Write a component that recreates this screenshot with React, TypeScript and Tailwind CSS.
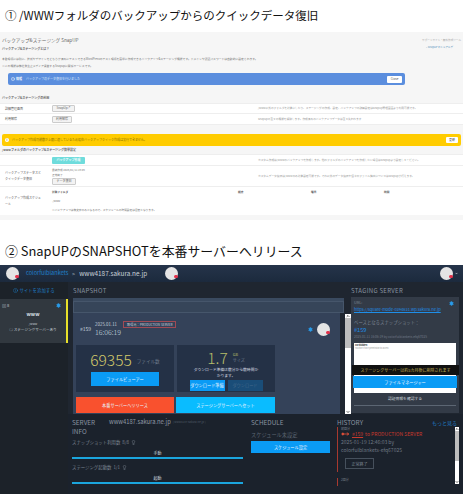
// App.tsx
import { ChevronDown, ChevronUp, Info, Lightbulb, Settings } from 'lucide-react'

const jp = "font-['Noto_Sans_CJK_JP','Liberation_Sans',sans-serif]"

function Avatar({ size }: { size: string }) {
  return (
    <div className={`relative shrink-0 rounded-full bg-[#e4e4e4] ${size}`}>
      <div className="absolute right-0 bottom-[14%] h-[22%] w-[30%] rounded-sm bg-[#e2304a]" />
    </div>
  )
}

function WpRow({ label, desc, children, h }: { label: React.ReactNode; desc: string; children: React.ReactNode; h: string }) {
  return (
    <div className={`flex items-center border-b border-[#eeeeee] bg-white ${h}`}>
      <div className="w-[52px] shrink-0 pl-[5px] text-[3px] leading-[6px] text-[#555]">{label}</div>
      <div className="w-[206px] shrink-0">{children}</div>
      <div className="text-[2.7px] whitespace-nowrap text-[#999]">{desc}</div>
    </div>
  )
}

function WpButton({ children, w }: { children: React.ReactNode; w: string }) {
  return (
    <div className={`flex h-[7px] items-center justify-center rounded-[1px] border border-[#cccccc] bg-[#f3f3f3] text-[3px] text-[#666] ${w}`}>
      {children}
    </div>
  )
}

function WpPanel() {
  return (
    <div className="mt-[3px] h-[188px] overflow-hidden bg-[#f6f6f6]">
      <div className="flex items-start justify-between pt-[5px] pr-[2px] pl-[2px]">
        <div>
          <div className="text-[4.6px] leading-[7px] text-[#666]">バックアップ&ステージング SnapUP</div>
          <div className="mt-[3px] text-[3px] leading-[5px] font-bold text-[#666]">バックアップ&ステージングとは？</div>
          <div className="mt-[5px] text-[2.8px] leading-[5px] whitespace-nowrap text-[#777]">
            本番環境には別に、技術やデザインをどちらか済みにテストできるWordPressのテスト環境を簡単に作成できるバックアップ&ステージング機能です。ドメインや認証パスワードは自動的に設定されます。
          </div>
          <div className="mt-[2px] text-[2.8px] leading-[5px] text-[#777]">※この機能は弊社発生止メディア運営するSnapupに関係サービスです。</div>
        </div>
        <div className="shrink-0 text-right">
          <div className="text-[2.6px] leading-[6px] text-[#aaa]">サポートサイト・無料作成ツール</div>
          <div className="mt-[3px] pr-[8px] text-[2.6px] text-[#5a94bd]">» SnapUPマニュアルデ</div>
        </div>
      </div>

      <div className="mt-[4px] ml-[8px] flex h-[12px] w-[397px] items-center rounded-[2px] bg-[#5b8ede] pr-[3px] pl-[3px]">
        <Info className="h-[4px] w-[4px] text-white" strokeWidth={2.5} />
        <span className="ml-[1px] text-[3px] font-bold text-white">情報</span>
        <span className="ml-[4px] text-[3px] text-[#dfe9fa]">バックアップのデータ復旧を行いました</span>
        <div className="ml-auto flex h-[7px] w-[15px] items-center justify-center rounded-[1px] bg-white text-[3px] text-[#555]">Close</div>
      </div>

      <div className="mt-[11px] pl-[2px] text-[3px] leading-[5px] font-bold text-[#666]">バックアップ&ステージングの利用</div>
      <div className="mt-[2px] border-t border-[#eeeeee]">
        <WpRow h="h-[10px]" label="詳細管理画面" desc="/www以外のフォルダを対象にしたり、ステージングの作成、設定、バックアップの詳細設定はSnapup管理画面より利用可能です。">
          <WpButton w="w-[23px]">SnapUp↗</WpButton>
        </WpRow>
        <WpRow h="h-[11px]" label="利用解除" desc="Snapupの全ての機能を解除します。作成済みのバックアップデータは全て失われます">
          <WpButton w="w-[20px]">利用解除</WpButton>
        </WpRow>
      </div>

      <div className="mx-[2px] mt-[9px] flex h-[12px] items-center rounded-[2px] bg-[#ffcc00] pr-[3px] pl-[3px]">
        <div className="flex h-[4px] w-[4px] items-center justify-center rounded-full bg-white text-[3px] font-bold text-[#a88600]">i</div>
        <span className="ml-[3px] text-[3px] text-[#8a7200]">バックアップ作成可能数が上限に達しているため現在バックアップクイック作成は実行できません。</span>
        <div className="ml-auto flex h-[6px] w-[12px] items-center justify-center rounded-[1px] bg-white text-[3px] text-[#555]">更新</div>
      </div>

      <div className="mt-[2px] pl-[2px] text-[3px] leading-[5px] font-bold text-[#666]">/wwwフォルダのバックアップ&ステージング簡単設定</div>
      <div className="mt-[1px] border-t border-[#eeeeee]">
        <WpRow h="h-[11px]" label="" desc="カスタム作成は/wwwのバックアップを作成します。他のフォルダのバックアップを作成したい場合はSnapupより設定してください。">
          <div className="flex h-[7px] w-[33px] items-center justify-center rounded-[1px] bg-[#6fdcdc] text-[3px] font-bold text-white">バックアップ作成</div>
        </WpRow>
        <WpRow
          h="h-[21px]"
          label={
            <>
              バックアップステータスと
              <br />
              クイックデータ復旧
            </>
          }
          desc="カスタムデータ復旧は/wwwのみ対象設定可能です。それ以外のデータ復旧や個々のファイル抽出についてはSnapupが行えます。"
        >
          <div className="text-[2.7px] leading-[5px] text-[#777]">最終作成 2025/01/11 16:06</div>
          <div className="text-[2.7px] leading-[5px] text-[#777]">正常終了</div>
          <WpButton w="w-[24px]">データ復旧</WpButton>
        </WpRow>
        <div className="flex h-[28px] items-center bg-white">
          <div className="w-[52px] shrink-0 pl-[5px] text-[3px] leading-[6px] text-[#555]">
            バックアップ作成スケジュ
            <br />
            ール
          </div>
          <div className="flex-1 text-[2.7px] text-[#777]">
            <div className="grid grid-cols-[186px_73px_73px_1fr] font-bold text-[#555]">
              <span>対象フォルダ</span>
              <span>頻度</span>
              <span>曜日</span>
              <span>時間</span>
            </div>
            <div className="mt-[5px]">./www</div>
            <div className="mt-[5px]">※バックアップは弊文字のみとなるので、スケジュールの時間設定は目安となります。</div>
          </div>
        </div>
      </div>
    </div>
  )
}

function StatBlue({ children, className }: { children: React.ReactNode; className: string }) {
  return <div className={`flex items-center justify-center text-[4.2px] whitespace-nowrap text-[#e8f4ff] ${className}`}>{children}</div>
}

function SnapshotPanel() {
  return (
    <div className="flex h-[116px] w-[271px] flex-col bg-[#3a4a5f] pt-[3px]">
      <div className="h-[12px] border border-[#46566b] bg-[#364559]" />
      <div className="flex min-h-0 flex-1">
        <div className="flex w-[267px] flex-col bg-[#344259] pl-[3px]">
          <div className="flex h-[32px] items-center pr-[10px]">
            <span className="ml-[4px] text-[5px] text-[#c8d2de]">#159</span>
            <div className="ml-[4px]">
              <div className="flex items-center gap-[6px]">
                <span className="text-[4.4px] text-[#c8d2de]">2025.01.11</span>
                <span className="border border-[#a04a55] px-[3px] py-[1px] text-[3.2px] leading-[3px] text-[#c8d2de]">取得元：PRODUCTION SERVER</span>
              </div>
              <div className="text-[7px] leading-[9px] font-light text-[#d8e0e8]">16:06:19</div>
            </div>
            <Settings className="ml-auto h-[5px] w-[5px] fill-[#2c9be8] text-[#2c9be8]" />
            <div className="ml-[4px]">
              <Avatar size="h-[13px] w-[13px]" />
            </div>
          </div>
          <div className="flex h-[47px] gap-[3px]">
            <div className="flex w-[98px] flex-col items-center bg-[#243146]">
              <div className="mt-[5px] flex h-[18px] items-end">
                <span className="text-[15.5px] leading-[18px] font-light text-[#d3c96a]">69355</span>
                <span className="mb-[3px] ml-[5px] text-[4.6px] text-[#6f7c8c]">ファイル数</span>
              </div>
              <StatBlue className="mt-[4px] h-[14px] w-[68px] bg-[#0a9bf5]">ファイルビューアー</StatBlue>
            </div>
            <div className="flex w-[98px] flex-col items-center bg-[#243146]">
              <div className="mt-[5px] flex h-[14px] items-center">
                <span className="text-[15.5px] leading-[14px] font-light text-[#b6bd6a]">1.7</span>
                <div className="ml-[5px] text-[4px] leading-[6px]">
                  <div className="text-[#b6bd6a]">GB</div>
                  <div className="text-[#6f7c8c]">サイズ</div>
                </div>
              </div>
              <div className="mt-[3px] text-center text-[3.8px] leading-[6px] text-[#d5dbe2]">
                ダウンロード準備は数分から数時間か
                <br />
                かります。
              </div>
              <div className="mt-[1px] flex gap-[3px]">
                <StatBlue className="h-[11px] w-[35px] bg-[#0a9bf5]">ダウンロード準備</StatBlue>
                <StatBlue className="h-[11px] w-[35px] bg-[#1a4d78] !text-[#43688a]">ダウンロード</StatBlue>
              </div>
            </div>
          </div>
          <div className="mt-[5px] flex h-[16px] gap-[2px]">
            <StatBlue className="w-[98px] bg-[#f9512e]">本番サーバーへリリース</StatBlue>
            <StatBlue className="w-[99px] bg-[#0abcff]">ステージングサーバーへセット</StatBlue>
          </div>
        </div>
        <div className="w-[4px] bg-[#1f2630]" />
      </div>
    </div>
  )
}

function ScrollBar({ w, h }: { w: string; h: string }) {
  return (
    <div className={`flex shrink-0 flex-col items-center justify-between bg-white ${w} ${h}`}>
      <ChevronUp className="h-[4px] w-[4px] text-black" strokeWidth={4} />
      <div className="mb-auto h-[30px] w-full bg-[#bdbdbd]" />
      <ChevronDown className="h-[4px] w-[4px] text-black" strokeWidth={4} />
    </div>
  )
}

function StagingPanel() {
  return (
    <div className="mt-[-1px] h-[116px] w-[108px] bg-[#333b47] px-[3px] pt-[3px]">
      <div className="flex items-center justify-between pr-[2px]">
        <span className="text-[3.8px] leading-[6px] text-[#7b8592]">URL:</span>
        <Settings className="mt-[1px] h-[5px] w-[5px] fill-[#2c9be8] text-[#2c9be8]" />
      </div>
      <div className="text-[4px] leading-[6px] whitespace-nowrap text-[#1f8fe8] underline">https://square-mode-0394631.wp.sakura.ne.jp</div>
      <div className="mt-[7px] text-[4.4px] leading-[6px] text-[#7b8592]">ベースとなるスナップショット：</div>
      <div className="mt-[2px] text-[5.6px] leading-[6px] text-[#1f8fe8]">#159</div>
      <div className="mt-[1px] text-[3.2px] leading-[6px] whitespace-nowrap text-[#6f7885]">2025.01.11 16:06:19 by colorfulblankets-efq67025</div>
      <div className="mt-[3px] h-[50px] bg-white">
        <div className="h-[22px] pt-[1px] pl-[1px]">
          <div className="text-[2.4px] leading-[3px] font-bold text-[#222]">Forbidden</div>
          <div className="text-[2px] leading-[3px] text-[#999]">You don't have permission to access</div>
        </div>
        <div className="ml-[-2px] flex h-[10px] w-[107px] items-center justify-center bg-[#111111] text-[4px] whitespace-nowrap text-[#c9b85a]">
          ステージングサーバーは約3カ月後に削除されます
        </div>
        <StatBlue className="mt-[1px] ml-[-1px] h-[12px] w-[104px] bg-[#0a9bf5]">ファイルマネージャー</StatBlue>
      </div>
      <div className="text-center text-[3.8px] leading-[12px] text-[#c8d0d8]">認証情報を確認する</div>
      <div className="h-[1px] bg-[#5c6673]" />
    </div>
  )
}

function Usage({ title, count, action }: { title: string; count: string; action: string }) {
  return (
    <div>
      <div className="flex h-[8px] items-center text-[4.4px] text-[#7b8592]">
        <span>{title}</span>
        <span className="ml-[2px]">{count}</span>
        <Lightbulb className="ml-[2px] h-[5px] w-[5px] text-[#8b95a1]" />
      </div>
      <div className="mt-[3px] text-center text-[4px] leading-[8px] text-[#c8d0d8]">{action}</div>
      <div className="h-[1.5px] bg-[#1ba5dd]" />
    </div>
  )
}

function BottomRow() {
  return (
    <div className="flex min-h-0 flex-1 bg-[#1b222c] pt-[4px] pl-[4px]">
      <div className="w-[171px] shrink-0">
        <div className="flex">
          <div className="w-[37px] text-[6.4px] leading-[9px] text-[#8a94a1]">
            SERVER
            <br />
            INFO
          </div>
          <div className="flex h-[9px] items-center text-[5.8px] whitespace-nowrap text-[#8f99a5]">
            www4187.sakura.ne.jp
            <span className="ml-[2px] text-[2.8px] text-[#4f5a67]">( www4187.sakura.ne.jp )</span>
          </div>
        </div>
        <div className="mt-[2px] flex flex-col gap-[4.5px]">
          <Usage title="スナップショット利用数" count="8/8" action="手動" />
          <Usage title="ステージング起動数" count="1/1" action="起動" />
        </div>
      </div>

      <div className="ml-[8px] w-[79px] shrink-0">
        <div className="text-[6.4px] leading-[9px] text-[#8a94a1]">SCHEDULE</div>
        <div className="mt-[4px] text-[5.2px] leading-[7px] text-[#5b6673]">スケジュール未設定</div>
        <StatBlue className="mt-[3px] h-[12px] bg-[#0a9bf5]">スケジュール設定</StatBlue>
      </div>

      <div className="ml-[7px] flex min-w-0 flex-1 flex-col">
        <div className="flex items-center justify-between pr-[6px]">
          <span className="text-[6.4px] leading-[9px] text-[#8a94a1]">HISTORY</span>
          <span className="text-[5px] text-[#1f7fc8]">もっと見る</span>
        </div>
        <div className="flex min-h-0 flex-1 pr-[4px]">
          <div className="min-w-0 flex-1">
            <div className="h-[45px] border-l border-[#a8392f] pl-[3px]">
              <div className="text-[3px] leading-[4px] text-[#7b8592]">初回分</div>
              <div className="flex h-[6px] items-center whitespace-nowrap text-[5px] text-[#c8392c]">
                <svg viewBox="0 0 12 6" className="mr-[2px] h-[4px] w-[9px]" fill="none" stroke="#e8513a" strokeWidth="1.2">
                  <circle cx="2" cy="3" r="1.5" fill="#e8513a" />
                  <path d="M3 3h8M8 1l3 2-3 2" />
                </svg>
                <span className="underline">#159</span>
                <span className="ml-[2px]">to PRODUCTION SERVER</span>
              </div>
              <div className="mt-[1px] text-[5px] leading-[8px] whitespace-nowrap text-[#6f7885]">2025-01-19 12:46:03 by</div>
              <div className="text-[5px] leading-[8px] text-[#6f7885]">colorfulblankets-efq67025</div>
              <div className="mt-[4px] ml-[4px] flex h-[11px] w-[29px] items-center justify-center border border-[#46505c] text-[4px] text-[#7b8592]">正常終了</div>
            </div>
            <div className="mt-[6px] h-[8px] border-l border-[#a8392f] pl-[3px] text-[3px] leading-[4px] text-[#7b8592]">2回分</div>
          </div>
          <ScrollBar w="w-[4px]" h="h-[57px]" />
        </div>
      </div>
    </div>
  )
}

function DarkApp() {
  return (
    <div className={`flex h-[229px] flex-col overflow-hidden bg-[#1f2630] ${jp}`}>
      <div className="flex h-[17px] shrink-0 items-center bg-gradient-to-b from-[#25344a] to-[#1c2a3d] pr-[5px] pl-[6px]">
        <Avatar size="h-[13px] w-[13px]" />
        <span className="ml-[7px] text-[5.6px] text-[#1f7fc8]">colorfulblankets</span>
        <span className="ml-[4px] text-[5px] text-[#c8d0d8]">&gt;</span>
        <span className="ml-[4px] text-[6.4px] text-[#c8d0d8]">www4187.sakura.ne.jp</span>
        <div className="ml-[18px]">
          <Avatar size="h-[13px] w-[13px]" />
        </div>
        <div className="ml-auto flex items-center gap-[2px]">
          <Avatar size="h-[13px] w-[13px]" />
          <ChevronDown className="h-[3px] w-[3px] text-white" strokeWidth={4} />
        </div>
      </div>
      <div className="flex min-h-0 flex-1">
        <div className="w-[68px] shrink-0 bg-[#1c2229]">
          <div className="flex h-[17px] items-center justify-center text-[4.4px] text-[#1f7fc8]">
            <Info className="mr-[1px] h-[5px] w-[5px]" />
            サイトを追加する
          </div>
          <div className="flex h-[44px] flex-col border-r-2 border-[#e8e02a] bg-[#31383f] px-[2px] pt-[3px]">
            <div className="flex items-center justify-between">
              <span className="text-[4px] leading-[6px] text-[#c8d0d8]">▯▯ 8</span>
              <Settings className="mr-[3px] h-[5px] w-[5px] fill-[#2c9be8] text-[#2c9be8]" />
            </div>
            <div className="mt-[3px] text-center text-[5px] leading-[6px] font-bold text-[#d8e0e8]">www</div>
            <div className="mt-[5px] text-center text-[3px] leading-[4px] text-[#c8d0d8]">/www</div>
            <div className="mt-[1px] text-center text-[3.6px] leading-[5px] whitespace-nowrap text-[#c8d0d8]">○ ステージングサーバーあり</div>
          </div>
        </div>
        <div className="flex min-w-0 flex-1 flex-col">
          <div className="flex h-[132px] shrink-0 pl-[5px]">
            <div className="w-[272px] shrink-0">
              <div className="flex h-[16px] items-center text-[6px] tracking-[0.3px] text-[#8a94a1]">SNAPSHOT</div>
              <SnapshotPanel />
            </div>
            <div className="mt-[32px] flex">
              <ScrollBar w="w-[6px]" h="h-[100px]" />
            </div>
            <div>
              <div className="flex h-[16px] items-center text-[6px] tracking-[0.3px] whitespace-nowrap text-[#8a94a1]">STAGING SERVER</div>
              <StagingPanel />
            </div>
          </div>
          <BottomRow />
        </div>
      </div>
    </div>
  )
}

export default function App() {
  return (
    <div className={`h-[500px] w-[463px] overflow-hidden bg-white ${jp}`}>
      <h2 className="flex h-[29px] items-center pl-[5px] text-[11.5px] leading-[22px] font-normal whitespace-nowrap text-[#111]">
        ① /WWWフォルダのバックアップからのクイックデータ復旧
      </h2>
      <WpPanel />
      <h2 className="mt-[18px] mb-[2px] flex h-[25px] items-center pl-[5px] text-[12.9px] leading-[22px] font-normal whitespace-nowrap text-[#111]">
        ② SnapUPのSNAPSHOTを本番サーバーへリリース
      </h2>
      <DarkApp />
    </div>
  )
}
